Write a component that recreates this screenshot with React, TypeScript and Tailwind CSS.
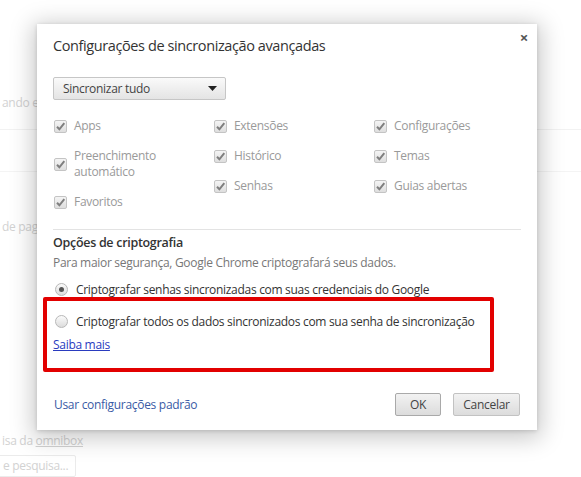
import React from 'react'

const font = { fontFamily: '"Open Sans", "Noto Sans", Arial, sans-serif' }

function Check({ label }: { label: React.ReactNode }) {
  return (
    <div className="flex items-center gap-[7px]">
      <span className="relative w-[13px] h-[13px] shrink-0 rounded-[2px] border border-[#c4c4c4] bg-gradient-to-b from-[#f4f4f4] to-[#dedede]">
        <svg viewBox="0 0 13 13" className="absolute -left-px -top-px w-[13px] h-[13px]">
          <path d="M3 6.8 L5.4 9.3 L10.3 3.2" fill="none" stroke="#7f7f7f" strokeWidth="2" />
        </svg>
      </span>
      <span className="text-[#9a9a9a] leading-[16px]">{label}</span>
    </div>
  )
}

function Radio({ checked, label }: { checked?: boolean; label: string }) {
  return (
    <div className="flex items-center gap-[8px]">
      <span className="flex items-center justify-center w-[13px] h-[13px] shrink-0 rounded-full border border-[#b8b8b8] bg-gradient-to-b from-[#fbfbfb] to-[#dcdcdc]">
        {checked && <span className="w-[5px] h-[5px] rounded-full bg-[#555]" />}
      </span>
      <span className="text-[#333]">{label}</span>
    </div>
  )
}

export default function App() {
  return (
    <div className="relative w-[581px] h-[477px] bg-white overflow-hidden text-[12px] tracking-[-0.3px]" style={font}>
      {/* page behind the overlay */}
      <div className="text-[#d2d2d2]">
        <div className="h-[130px] border-b border-[#f2f2f2] pt-[94px] pl-[2px]">ando es</div>
        <div className="h-[42px] border-b border-[#f4f4f4]" />
        <div className="pt-[46px] pl-[2px]">de pag</div>
        <div className="pt-[196px] pl-[2px]">isa da <span className="underline">omnibox</span></div>
        <div className="mt-[5px] ml-[-4px] w-[80px] h-[22px] border border-[#ebebeb] rounded-[2px] pl-[6px] leading-[20px]">e pesquisa...</div>
      </div>

      {/* dialog */}
      <div className="absolute left-[37px] top-[24px] w-[500px] h-[406px] bg-white shadow-[0_4px_22px_4px_rgba(0,0,0,0.22),0_1px_4px_rgba(0,0,0,0.15)] flex flex-col px-[16px]">
        <div className="absolute right-[9px] top-[2px] text-[#555] text-[15px] font-bold">×</div>
        <div className="pt-[12px] text-[14.5px] tracking-[-0.4px] text-[#333] leading-[20px]">Configurações de sincronização avançadas</div>

        <div className="mt-[21px] w-[173px] h-[23px] flex items-center justify-between pl-[9px] pr-[8px] rounded-[2px] border border-[#c6c6c6] bg-gradient-to-b from-[#fafafa] to-[#e4e4e4] text-[#444]">
          <span>Sincronizar tudo</span>
          <svg width="9" height="5" viewBox="0 0 9 5"><path d="M0 0 H9 L4.5 5 Z" fill="#222" /></svg>
        </div>

        <div className="mt-[18px] flex pl-[1px]">
          <div className="w-[160px] flex flex-col gap-[14px]">
            <Check label="Apps" />
            <Check label={<>Preenchimento<br />automático</>} />
            <Check label="Favoritos" />
          </div>
          <div className="w-[160px] flex flex-col gap-[14px]">
            <Check label="Extensões" />
            <Check label="Histórico" />
            <Check label="Senhas" />
          </div>
          <div className="flex flex-col gap-[14px]">
            <Check label="Configurações" />
            <Check label="Temas" />
            <Check label="Guias abertas" />
          </div>
        </div>

        <div className="mt-[19px] border-t border-[#e3e3e3]" />
        <div className="mt-[4px] font-semibold text-[#333] text-[12.5px]">Opções de criptografia</div>
        <div className="mt-[1px] text-[#777]">Para maior segurança, Google Chrome criptografará seus dados.</div>
        <div className="mt-[9px] pl-[2px]">
          <Radio checked label="Criptografar senhas sincronizadas com suas credenciais do Google" />
        </div>
        <div className="mt-[14px] pl-[2px]">
          <Radio label="Criptografar todos os dados sincronizados com sua senha de sincronização" />
        </div>
        <div className="mt-[5px]">
          <a className="text-[#2a3bbf] underline">Saiba mais</a>
        </div>

        <div className="mt-auto mb-[14px] flex items-center justify-between">
          <a className="text-[#3a5ba5] pl-[1px]">Usar configurações padrão</a>
          <div className="flex gap-[12px] pr-[1px]">
            <button className="w-[46px] h-[23px] border border-[#a9a9a9] rounded-[2px] bg-gradient-to-b from-[#f2f2f2] to-[#dcdcdc] text-[#444]">OK</button>
            <button className="w-[67px] h-[23px] border border-[#c2c2c2] rounded-[2px] bg-gradient-to-b from-[#f2f2f2] to-[#dcdcdc] text-[#444]">Cancelar</button>
          </div>
        </div>
      </div>

      {/* red annotation box */}
      <div className="absolute left-[43px] top-[297px] w-[451px] h-[75px] border-[4px] border-[#e20000] rounded-[2px]" />
    </div>
  )
}
